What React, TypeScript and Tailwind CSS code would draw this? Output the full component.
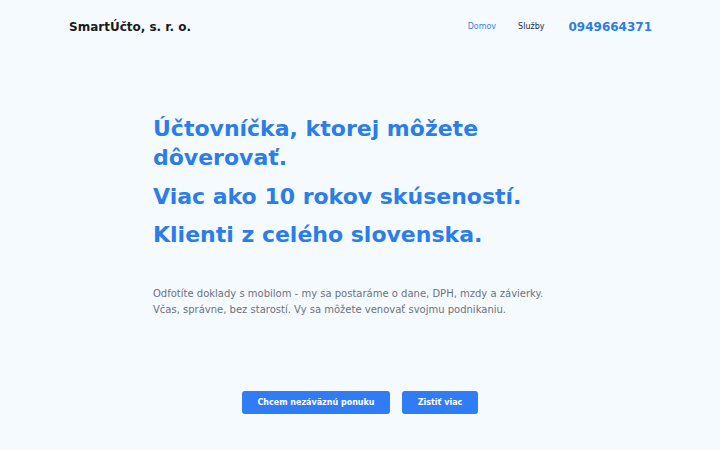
const font = { fontFamily: '"DejaVu Sans", Verdana, sans-serif' }

function Header() {
    return (
        <header className="flex items-center justify-between h-[54px] pl-[69px] pr-[68px]">
            <a href="#" className="text-[12px] font-bold text-[#1a1a1a]">SmartÚčto, s. r. o.</a>
            <nav className="flex items-center">
                <a href="#" className="text-[8px] text-[#3b7fe0] mr-[22px]">Domov</a>
                <a href="#" className="text-[8px] text-[#1f2937] mr-[24px]">Služby</a>
                <a href="tel:0949664371" className="text-[12px] font-bold text-[#2b7de9]">0949664371</a>
            </nav>
        </header>
    )
}

export default function App() {
    return (
        <div style={font} className="min-h-[450px] w-full bg-[#f5fafe]">
            <Header />

            {/* Hero */}
            <section className="w-[414px] mx-auto pt-[60px]">
                <h1 className="text-[22px] font-bold leading-[29px] text-[#2b7de9] w-[370px]">
                    Účtovníčka, ktorej môžete dôverovať.
                </h1>
                <h2 className="text-[22px] font-bold leading-[29px] text-[#2b7de9] mt-[10px]">
                    Viac ako 10 rokov skúseností.
                </h2>
                <h2 className="text-[22px] font-bold leading-[29px] text-[#2b7de9] mt-[9px]">
                    Klienti z celého slovenska.
                </h2>

                <p className="mt-[37px] text-[10px] leading-[16px] text-[#6b7280]">
                    Odfotíte doklady s mobilom - my sa postaráme o dane, DPH, mzdy a závierky.
                    <br />
                    Včas, správne, bez starostí. Vy sa môžete venovať svojmu podnikaniu.
                </p>
            </section>

            {/* CTA */}
            <div className="flex justify-center gap-[12px] mt-[73px]">
                <a href="#" className="flex items-center justify-center h-[23px] w-[148px] rounded-[3px] bg-[#2f7cf6] text-white text-[8px] font-bold">
                    Chcem nezáväznú ponuku
                </a>
                <a href="#" className="flex items-center justify-center h-[23px] w-[76px] rounded-[3px] bg-[#2f7cf6] text-white text-[8px] font-bold">
                    Zistiť viac
                </a>
            </div>
        </div>
    )
}
